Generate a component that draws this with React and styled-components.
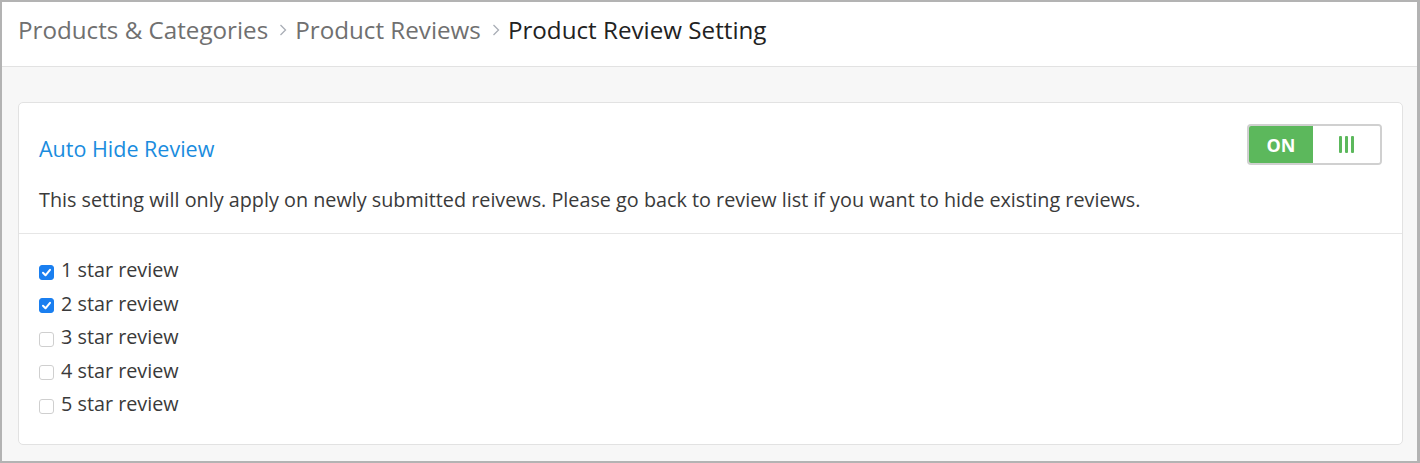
import React, { useState } from 'react'
import styled, { createGlobalStyle } from 'styled-components'

const GlobalStyle = createGlobalStyle`
  * { box-sizing: border-box; }
  body {
    margin: 0;
    font-family: 'Open Sans', 'Liberation Sans', sans-serif;
    color: #333;
  }
`

const crumbs = ['Products & Categories', 'Product Reviews', 'Product Review Setting']
const levels = [1, 2, 3, 4, 5]

function App() {
  const [checked, setChecked] = useState({ 1: true, 2: true })
  const [on, setOn] = useState(true)

  return (
    <Frame>
      <GlobalStyle />
      <Header>
        {crumbs.map((c, i) => (
          <React.Fragment key={c}>
            {i > 0 && (
              <Sep width='8' height='14' viewBox='0 0 8 14'>
                <polyline points='1.5,2 6.5,7 1.5,12' />
              </Sep>
            )}
            <Crumb $current={i === crumbs.length - 1}>{c}</Crumb>
          </React.Fragment>
        ))}
      </Header>
      <Body>
        <Card>
          <CardTop>
            <TitleRow>
              <Title>Auto Hide Review</Title>
              <Toggle onClick={() => setOn(!on)}>
                <ToggleOn>ON</ToggleOn>
                <ToggleHandle>
                  <Bar />
                  <Bar />
                  <Bar />
                </ToggleHandle>
              </Toggle>
            </TitleRow>
            <Description>
              This setting will only apply on newly submitted reivews. Please go back to review list if you
              want to hide existing reviews.
            </Description>
          </CardTop>
          <List>
            {levels.map((n) => (
              <Option key={n} onClick={() => setChecked({ ...checked, [n]: !checked[n] })}>
                <Box $checked={!!checked[n]}>
                  {checked[n] && (
                    <svg width='11' height='11' viewBox='0 0 11 11'>
                      <polyline points='2,5.8 4.5,8.3 9,2.8' />
                    </svg>
                  )}
                </Box>
                <span>{n} star review</span>
              </Option>
            ))}
          </List>
        </Card>
      </Body>
    </Frame>
  )
}

const Frame = styled.div`
  width: 1420px;
  height: 463px;
  border: 2px solid #b3b3b3;
  border-right-width: 3px;
  display: flex;
  flex-direction: column;
  background: #f7f7f7;
`

const Header = styled.div`
  height: 65px;
  flex-shrink: 0;
  display: flex;
  align-items: center;
  padding: 0 16px 10px;
  background: #fff;
  border-bottom: 1px solid #e2e2e2;
  font-size: 24.2px;
`

const Crumb = styled.span`
  color: ${(p) => (p.$current ? '#222' : '#707070')};
`

const Sep = styled.svg`
  margin: 2px 8px 0 11px;
  fill: none;
  stroke: #a9aeb6;
  stroke-width: 1.3;
`

const Body = styled.div`
  flex: 1;
  padding: 35px 14px 16px 16px;
`

const Card = styled.div`
  height: 100%;
  background: #fff;
  border: 1px solid #e2e2e2;
  border-radius: 5px;
`

const CardTop = styled.div`
  padding: 21px 20px 20px 20px;
  border-bottom: 1px solid #e6e6e6;
`

const TitleRow = styled.div`
  display: flex;
  justify-content: space-between;
  align-items: flex-start;
`

const Title = styled.div`
  margin-top: 10px;
  font-size: 21.5px;
  color: #1a8cde;
`

const Toggle = styled.div`
  width: 135px;
  height: 41px;
  display: flex;
  border: 2px solid #d0d0d0;
  border-radius: 4px;
  overflow: hidden;
  cursor: pointer;
`

const ToggleOn = styled.div`
  width: 64px;
  display: flex;
  align-items: center;
  justify-content: center;
  background: #5cb85c;
  color: #fff;
  font-weight: 700;
  font-size: 18px;
`

const ToggleHandle = styled.div`
  flex: 1;
  display: flex;
  align-items: center;
  justify-content: center;
  gap: 3px;
  background: #fff;
`

const Bar = styled.span`
  width: 3px;
  height: 17px;
  background: #5cb85c;
  border-radius: 1px;
`

const Description = styled.div`
  margin-top: 21px;
  font-size: 19.8px;
  color: #3a3a3a;
`

const List = styled.div`
  padding: 23px 20px;
  display: flex;
  flex-direction: column;
  gap: 7.5px;
`

const Option = styled.label`
  display: flex;
  align-items: center;
  font-size: 19.8px;
  color: #3a3a3a;
  line-height: 26px;
  cursor: pointer;
`

const Box = styled.span`
  width: 15px;
  height: 15px;
  margin: 4px 7px 0 0;
  display: flex;
  align-items: center;
  justify-content: center;
  border-radius: 3px;
  border: 1px solid ${(p) => (p.$checked ? '#1a7ff0' : '#cfcfcf')};
  background: ${(p) => (p.$checked ? '#1a7ff0' : '#fff')};

  svg {
    fill: none;
    stroke: #fff;
    stroke-width: 2;
    stroke-linecap: round;
    stroke-linejoin: round;
  }
`

export default App
